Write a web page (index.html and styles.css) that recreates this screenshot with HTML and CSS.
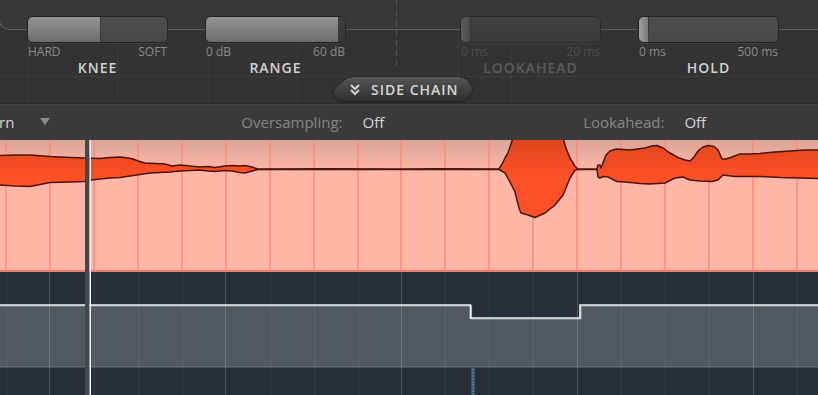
FILE: index.html
```html
<!DOCTYPE html>
<html>
<head>
	<title>Gate</title>
	<link rel="stylesheet" href="styles.css">
</head>
<body>
	<div class="top">
		<div class="controls">
			<div class="group knee">
				<div class="slider"><div class="fill" style="width:72px"></div></div>
				<div class="ends"><span>HARD</span><span>SOFT</span></div>
				<div class="title">KNEE</div>
			</div>
			<div class="group range">
				<div class="slider"><div class="fill" style="width:134px"></div><div class="cap"></div></div>
				<div class="ends"><span>0 dB</span><span>60 dB</span></div>
				<div class="title">RANGE</div>
			</div>
			<div class="group lookahead off">
				<div class="slider"><div class="knob"></div></div>
				<div class="ends"><span>0 ms</span><span>20 ms</span></div>
				<div class="title">LOOKAHEAD</div>
			</div>
			<div class="group hold">
				<div class="slider"><div class="knob"></div></div>
				<div class="ends"><span>0 ms</span><span>500 ms</span></div>
				<div class="title">HOLD</div>
			</div>
		</div>
		<div class="sc-row">
			<button type="button" class="sidechain">
				<svg class="sc-shape" width="142" height="27" viewBox="0 0 142 27">
					<defs>
						<linearGradient id="scg" x1="0" y1="0" x2="0" y2="1">
							<stop offset="0" stop-color="#555555"/>
							<stop offset="1" stop-color="#2d2d2d"/>
						</linearGradient>
					</defs>
					<path d="M20,1 L128,1 C133,1 136,4 139,9 C141,12 141,15 139,18 C137,22 134,26 129,26 L10,26 C6,26 4,24 2,20 C0,17 0,15 3,12 L12,4 C14,2 16,1 20,1 Z" fill="url(#scg)" stroke="#1f1f1f" stroke-width="1"/>
					<path d="M20,2 L128,2" stroke="#676767" stroke-width="1"/>
				</svg>
				<span class="sc-label">
					<svg width="10" height="12" viewBox="0 0 10 12"><polyline points="1,1 5,5 9,1" fill="none" stroke="#d4d4d4" stroke-width="2"/><polyline points="1,6 5,10 9,6" fill="none" stroke="#d4d4d4" stroke-width="2"/></svg>
					SIDE CHAIN
				</span>
			</button>
		</div>
	</div>
	<div class="toolbar">
		<span class="value first">rn</span>
		<span class="arrow"></span>
		<span class="label over">Oversampling:</span>
		<span class="value">Off</span>
		<span class="label look">Lookahead:</span>
		<span class="value">Off</span>
	</div>
	<svg class="display" width="818" height="255" viewBox="0 0 818 255">
		<defs>
			<linearGradient id="bg" x1="0" y1="0" x2="0" y2="30" gradientUnits="userSpaceOnUse">
				<stop offset="0" stop-color="#d9a597"/>
				<stop offset="1" stop-color="#ffb6a6"/>
			</linearGradient>
			<linearGradient id="wf" x1="0" y1="0" x2="0" y2="40" gradientUnits="userSpaceOnUse">
				<stop offset="0" stop-color="#e0461f"/>
				<stop offset="1" stop-color="#ff5127"/>
			</linearGradient>
		</defs>
		<rect x="0" y="0" width="818" height="131" fill="url(#bg)"/>
		<g stroke="#ff8b74" stroke-width="1.5">
			<line x1="6" y1="0" x2="6" y2="131"/>
			<line x1="50" y1="0" x2="50" y2="131"/>
			<line x1="94" y1="0" x2="94" y2="131"/>
			<line x1="138" y1="0" x2="138" y2="131"/>
			<line x1="182" y1="0" x2="182" y2="131"/>
			<line x1="226" y1="0" x2="226" y2="131"/>
			<line x1="270" y1="0" x2="270" y2="131"/>
			<line x1="314" y1="0" x2="314" y2="131"/>
			<line x1="358" y1="0" x2="358" y2="131"/>
			<line x1="401" y1="0" x2="401" y2="131"/>
			<line x1="445" y1="0" x2="445" y2="131"/>
			<line x1="489" y1="0" x2="489" y2="131"/>
			<line x1="533" y1="0" x2="533" y2="131"/>
			<line x1="577" y1="0" x2="577" y2="131"/>
			<line x1="621" y1="0" x2="621" y2="131"/>
			<line x1="665" y1="0" x2="665" y2="131"/>
			<line x1="709" y1="0" x2="709" y2="131"/>
			<line x1="753" y1="0" x2="753" y2="131"/>
			<line x1="797" y1="0" x2="797" y2="131"/>
		</g>
		<path fill="url(#wf)" stroke="#4a140b" stroke-width="1.5" stroke-linejoin="round"
			d="M-2,15.5 L15,15 L30,15 L50,16.5 L70,17.5 L85,18 L100,18.5 L110,17.5 L120,17 L128,18 L133,19 L138,21 L145,23 L155,23.5 L165,24 L172,26 L180,25 L190,26 L200,27 L208,26.5 L215,27.5 L225,26 L232,25.5 L240,26 L245,25.5 L252,27 L258,29 L330,28.7 L400,29 L440,28.8 L499,29 L502,24 L505,18 L508,13 L511,4 L513,-2 L563,-2 L566,8 L570,18 L575,26.5 L578,29 L597,29 L598,25 L600,25 L601,28 L603,23 L606,15 L610,11 L616,9 L630,10 L645,8 L652,6 L657,5.5 L663,8 L670,13 L678,17.5 L685,20 L690,21 L694,17 L698,11 L703,7 L708,5.5 L714,6.5 L718,10 L722,19 L726,19 L732,17 L740,14 L750,14 L760,13.5 L775,12 L790,11 L805,10 L820,10 L820,38.5 L800,38 L780,37.5 L760,36.5 L735,36.5 L723,35 L718,40 L712,41.5 L700,41 L690,40 L683,37 L675,38 L665,43 L650,44 L640,43.5 L625,42 L617,41.5 L608,37 L603,36.5 L600,38 L598,37 L597,29.5 L578,29.5 L575,30 L570,38 L563,55 L555,65 L545,73 L535,77.5 L528,75 L521,73 L519,68 L515,52 L510,42 L505,33 L500,30 L499,29.5 L440,29.6 L400,29.5 L330,29.6 L258,29.5 L252,31 L245,33 L240,32.5 L232,31 L225,30.5 L215,31.5 L208,31 L200,30 L190,30.5 L180,31 L170,32 L160,32.5 L150,33 L140,34.5 L130,36 L120,37.5 L110,38 L100,39 L91,40 L85,41.5 L70,42 L50,42.5 L30,46.5 L15,46 L-2,45 Z"/>
		<rect x="0" y="130" width="818" height="2" fill="#e9806e"/>
		<rect x="0" y="132" width="818" height="123" fill="#262e38"/>
		<polygon points="0,166 471,166 471,179 580,179 580,166 818,166 818,226 0,226" fill="#525860"/>
		<rect x="0" y="226" width="818" height="1.5" fill="#646a71"/>
		<g stroke="rgba(255,255,255,0.07)" stroke-width="1">
			<line x1="6.5" y1="132" x2="6.5" y2="255"/>
			<line x1="94.5" y1="132" x2="94.5" y2="255"/>
			<line x1="138.5" y1="132" x2="138.5" y2="255"/>
			<line x1="182.5" y1="132" x2="182.5" y2="255"/>
			<line x1="270.5" y1="132" x2="270.5" y2="255"/>
			<line x1="314.5" y1="132" x2="314.5" y2="255"/>
			<line x1="358.5" y1="132" x2="358.5" y2="255"/>
			<line x1="445.5" y1="132" x2="445.5" y2="255"/>
			<line x1="489.5" y1="132" x2="489.5" y2="255"/>
			<line x1="533.5" y1="132" x2="533.5" y2="255"/>
			<line x1="621.5" y1="132" x2="621.5" y2="255"/>
			<line x1="665.5" y1="132" x2="665.5" y2="255"/>
			<line x1="709.5" y1="132" x2="709.5" y2="255"/>
			<line x1="797.5" y1="132" x2="797.5" y2="255"/>
		</g>
		<g stroke="rgba(255,255,255,0.2)" stroke-width="1">
			<line x1="49.5" y1="132" x2="49.5" y2="255"/>
			<line x1="225.5" y1="132" x2="225.5" y2="255"/>
			<line x1="401.5" y1="132" x2="401.5" y2="255"/>
			<line x1="577.5" y1="132" x2="577.5" y2="255"/>
			<line x1="753.5" y1="132" x2="753.5" y2="255"/>
		</g>
		<polyline points="0,166 471.5,166 471.5,179 581,179 581,166 818,166" fill="none" stroke="#9ea2a7" stroke-width="1.2"/>
		<polyline points="0,165 470.5,165 470.5,178 580,178 580,165 818,165" fill="none" stroke="#f4f4f4" stroke-width="1.6"/>
		<rect x="471.5" y="228" width="3" height="27" fill="#58769a"/>
		<line x1="473" y1="228" x2="473" y2="255" stroke="#1c232c" stroke-width="1" stroke-dasharray="1 2"/>
		<rect x="85" y="0" width="4.5" height="255" fill="#45474b"/>
		<rect x="89.5" y="0" width="1.5" height="255" fill="#f2f2f2"/>
	</svg>
</body>
</html>
```

FILE: styles.css
```css
body {
	margin: 0;
	width: 818px;
	height: 395px;
	overflow: hidden;
	background: #262e38;
	font-family: "Open Sans", "DejaVu Sans", sans-serif;
}

.top {
	position: relative;
	height: 103px;
	overflow: hidden;
	background-color: #333333;
	background-image:
		linear-gradient(#5c5c5c, #5c5c5c),
		linear-gradient(#3c3c3c, #3c3c3c),
		repeating-linear-gradient(#555555 0, #555555 6px, transparent 6px, transparent 10px),
		linear-gradient(to right,
			transparent 28px, #3a3a3a 28px, #3a3a3a 29px, transparent 29px,
			transparent 117px, #3a3a3a 117px, #3a3a3a 118px, transparent 118px,
			transparent 208px, #3a3a3a 208px, #3a3a3a 209px, transparent 209px,
			transparent 297px, #3a3a3a 297px, #3a3a3a 298px, transparent 298px,
			transparent 458px, #3a3a3a 458px, #3a3a3a 459px, transparent 459px,
			transparent 511px, #3a3a3a 511px, #3a3a3a 512px, transparent 512px),
		linear-gradient(#373737, #373737);
	background-size: 100% 1px, 100% 1px, 1px 66px, 100% 100%, 100% 29px;
	background-position: 10px 29px, 0 76px, 396px 0, 0 0, 0 0;
	background-repeat: no-repeat;
}

.top::before {
	content: "";
	position: absolute;
	left: -1px;
	top: 0;
	width: 12px;
	height: 29px;
	border-left: 1px solid #5c5c5c;
	border-bottom: 1px solid #5c5c5c;
	border-bottom-left-radius: 10px;
}

.controls {
	position: relative;
	display: flex;
	padding: 16px 0 0 27px;
}

.group {
	width: 141px;
	margin-right: 37px;
}

.group.range {
	margin-right: 114px;
}

.slider {
	display: flex;
	height: 25px;
	border: 1px solid #232323;
	border-radius: 6px;
	overflow: hidden;
	background: linear-gradient(#4e4e4e, #474747);
	box-shadow: 0 1px 0 rgba(255, 255, 255, 0.06);
}

.fill {
	height: 100%;
	background: linear-gradient(#939393, #838383 45%, #6c6c6c);
	border-right: 1px solid #3a3a3a;
}

.cap {
	width: 6px;
	background: linear-gradient(#3e3e3e, #363636);
}

.knob {
	width: 9px;
	height: 100%;
	background: linear-gradient(to right, #a0a0a0, #7c7c7c);
	border-right: 1px solid #3c3c3c;
}

.ends {
	display: flex;
	justify-content: space-between;
	margin-top: 2px;
	padding: 0 1px;
	font-size: 12px;
	line-height: 14px;
	color: #8b8b8b;
}

.title {
	text-align: center;
	font-size: 14px;
	font-weight: 600;
	letter-spacing: 1px;
	line-height: 17px;
	color: #d2d2d2;
}

.off .slider {
	background: linear-gradient(#404040, #3b3b3b);
	border-color: #2a2a2a;
}

.off .knob {
	background: linear-gradient(to right, #5c5c5c, #4a4a4a);
	border-right-color: #333333;
}

.off .ends {
	color: #4e4e4e;
}

.off .title {
	color: #5b5b5b;
}

.sc-row {
	position: relative;
	display: flex;
	padding-left: 332px;
	height: 27px;
}

.sidechain {
	display: grid;
	padding: 0;
	margin: 0;
	border: none;
	background: none;
	font-family: inherit;
	cursor: pointer;
}

.sc-shape,
.sc-label {
	grid-area: 1 / 1;
}

.sc-label {
	display: flex;
	align-items: center;
	gap: 11px;
	padding-left: 18px;
	font-size: 14px;
	font-weight: 600;
	letter-spacing: 1px;
	color: #d6d6d6;
}

.toolbar {
	display: flex;
	align-items: center;
	height: 36px;
	border-top: 1px solid #2b2b2b;
	background: #3a3a3a;
	box-shadow: inset 0 1px 0 #444444;
	font-size: 15px;
}

.label {
	color: #878787;
	margin-right: 20px;
}

.value {
	color: #d4d4d4;
}

.first {
	margin-left: -1px;
}

.arrow {
	width: 0;
	height: 0;
	margin: 0 0 2px 26px;
	border-left: 5px solid transparent;
	border-right: 5px solid transparent;
	border-top: 7px solid #8c8c8c;
}

.over {
	margin-left: 191px;
}

.look {
	margin-left: 199px;
}

.display {
	display: block;
}
```
